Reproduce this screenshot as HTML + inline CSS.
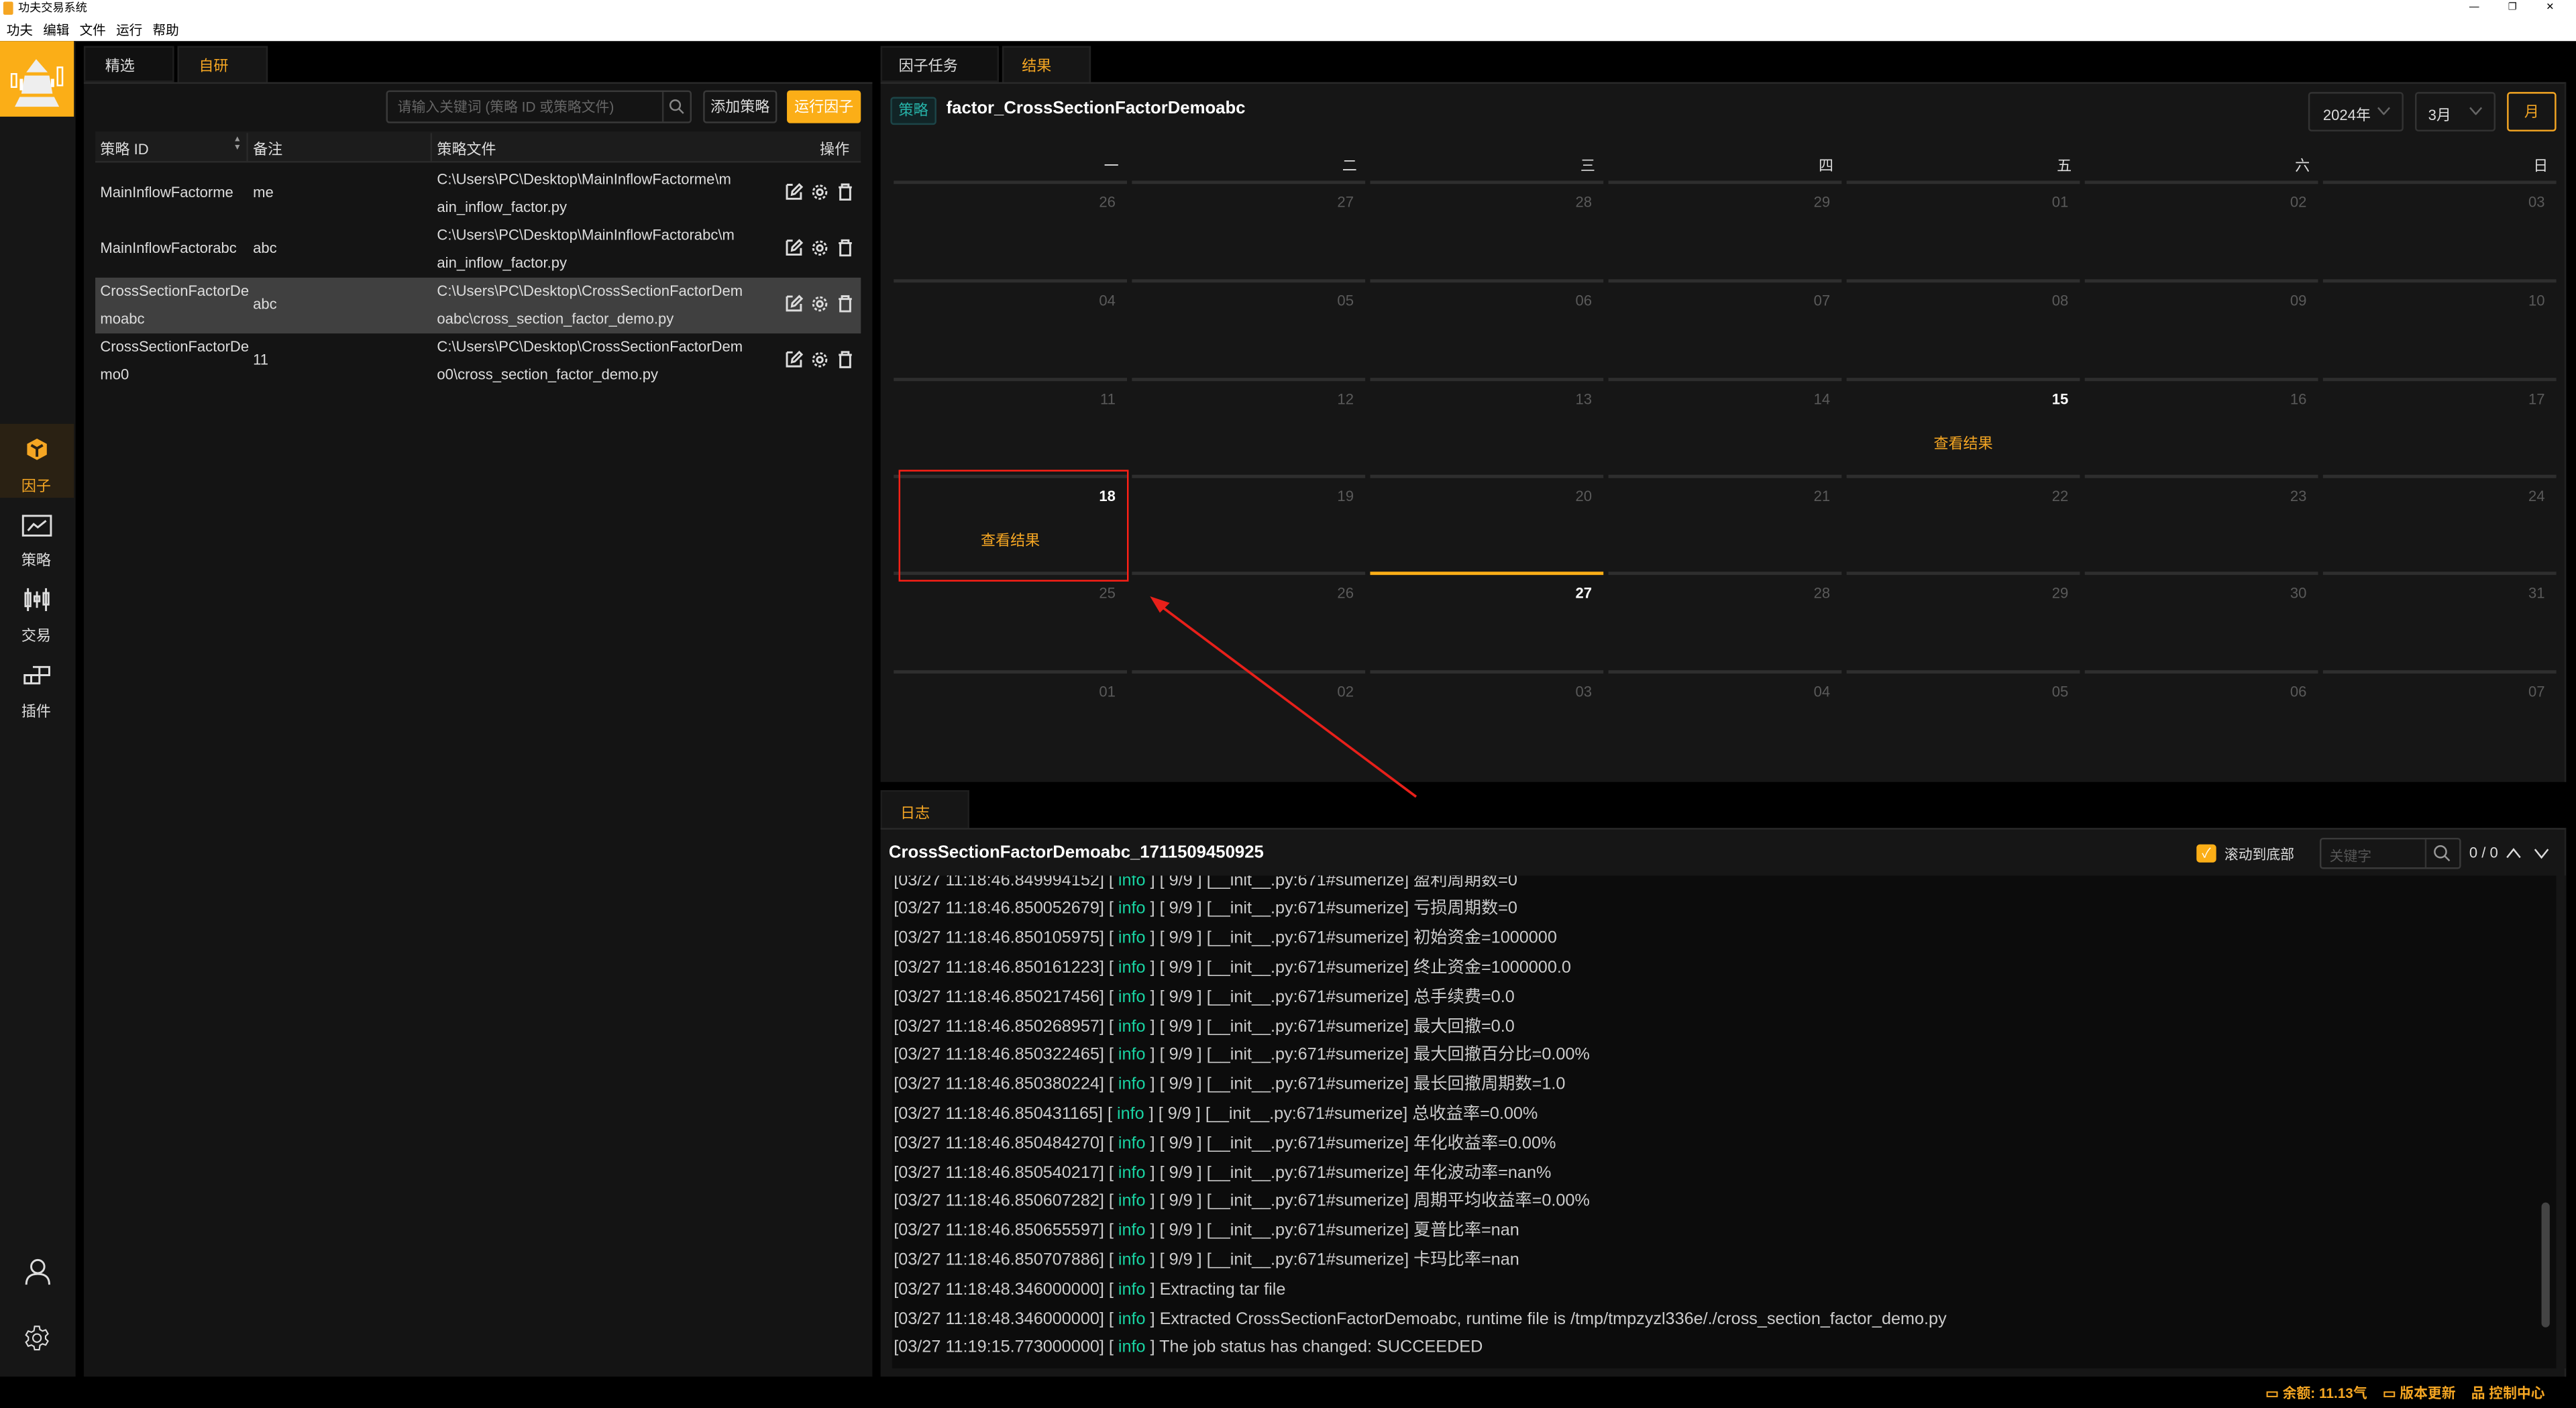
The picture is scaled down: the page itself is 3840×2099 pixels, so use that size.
<!DOCTYPE html>
<html><head><meta charset="utf-8"><style>
*{margin:0;padding:0;box-sizing:border-box}
html,body{width:3840px;height:2099px;overflow:hidden;background:#000}
#w{width:1568px;height:857px;transform:scale(2.44898);transform-origin:0 0;position:relative;background:#000;font-family:"Liberation Sans","Noto Sans CJK SC",sans-serif;color:#ddd;font-size:9px}
.a{position:absolute}
.or{color:#f5a623}
.ic{stroke:#ddd;fill:none;stroke-width:1.2}
.row{position:absolute;left:58px;width:466px;height:34px}
.row div{position:absolute;line-height:17px;font-size:9px;color:#ddd}
.ln{position:absolute;height:2px;background:#2e2e2e}
.dn{position:absolute;font-size:9px;color:#5a5a5a;text-align:right;width:30px}
.log{position:absolute;left:544px;font-size:10.3px;color:#ccc;white-space:nowrap;line-height:17.8px}
.log i{font-style:normal;color:#19d3a2}
</style></head><body><div id="w">
<div class="a" style="left:0;top:0;width:1568px;height:25px;background:#fff"></div>
<div class="a" style="left:2px;top:1px;width:6px;height:8px;background:#f5a623;border-radius:1px"></div>
<div class="a" style="left:11px;top:0;font-size:7px;color:#000;line-height:11px">功夫交易系统</div>
<div class="a" style="left:1503px;top:0;font-size:6px;color:#000;line-height:11px;word-spacing:16px">— ❐ ✕</div>
<div class="a" style="left:4px;top:12px;font-size:8px;color:#000;line-height:13px;word-spacing:4px">功夫 编辑 文件 运行 帮助</div>
<div class="a" style="left:0;top:25px;width:46px;height:813px;background:#161616"></div>
<div class="a" style="left:0;top:25px;width:45px;height:46px;background:#fbae17"></div>
<svg class="a" style="left:4px;top:29px" width="37" height="38" viewBox="0 0 37 38"><path d="M18 7 L12 15 L25 15Z" fill="#eee"/><path d="M11 17 L26 17 L28 28 L9 28Z" fill="#eee"/><path d="M8 30 L29 30 L32 36 L5 36Z" fill="#eee"/><rect x="3" y="16" width="3" height="8" fill="none" stroke="#fff"/><rect x="31" y="12" width="3" height="11" fill="none" stroke="#fff"/><rect x="27" y="19" width="2" height="5" fill="#fff"/><rect x="8" y="19" width="2" height="7" fill="#fff"/></svg>
<div class="a" style="left:0;top:258px;width:45px;height:45px;background:#2a2113"></div>
<svg class="a" style="left:15px;top:266px" width="15" height="15" viewBox="0 0 15 15"><path d="M7.5 1 L13.5 4.2 L13.5 10.8 L7.5 14 L1.5 10.8 L1.5 4.2Z" fill="#f5a623"/><path d="M4 5 L7.5 7 L11 5 M7.5 7 V12" stroke="#2a2113" stroke-width="1.6" fill="none"/></svg>
<div class="a or" style="left:13px;top:289px;font-size:9px">因子</div>
<svg class="a" style="left:13px;top:313px" width="19" height="14" viewBox="0 0 19 14"><rect x="1" y="1" width="17" height="12" class="ic"/><path d="M4 10 L7.5 6 L10 8 L15 4" class="ic"/></svg>
<div class="a" style="left:13px;top:334px">策略</div>
<svg class="a" style="left:14px;top:358px" width="17" height="14" viewBox="0 0 17 14"><path d="M3 0V14 M8.5 2V12 M14 0V14" class="ic"/><rect x="1.5" y="3" width="3" height="8" fill="#161616" class="ic"/><rect x="7" y="5" width="3" height="3" fill="#161616" class="ic"/><rect x="12.5" y="3" width="3" height="7" fill="#161616" class="ic"/></svg>
<div class="a" style="left:13px;top:380px">交易</div>
<svg class="a" style="left:14px;top:405px" width="17" height="12" viewBox="0 0 17 12"><path d="M1 6H10V11H1Z M5 6V11 M6 1H16V6H6 M10 1V6" class="ic"/></svg>
<div class="a" style="left:13px;top:426px">插件</div>
<svg class="a" style="left:15px;top:766px" width="16" height="17" viewBox="0 0 16 17"><circle cx="8" cy="5" r="4" class="ic" stroke-width="1.4"/><path d="M1 16 C1 11 4 9.5 8 9.5 C12 9.5 15 11 15 16" class="ic" stroke-width="1.4"/></svg>
<svg class="a" style="left:14px;top:806px" width="17" height="17" viewBox="0 0 24 24"><path d="M12 8.5a3.5 3.5 0 1 0 0 7a3.5 3.5 0 1 0 0-7z M10 2h4l.6 2.8 2.2 1.2 2.7-1 2 3.4-2.1 1.9v2.4l2.1 1.9-2 3.4-2.7-1-2.2 1.2L14 22h-4l-.6-2.8-2.2-1.2-2.7 1-2-3.4 2.1-1.9V11.3L2.5 9.4l2-3.4 2.7 1 2.2-1.2z" class="ic" stroke-width="1.8"/></svg>
<div class="a" style="left:51px;top:28px;width:55px;height:22px;background:#111;border:1px solid #1e1e1e"></div>
<div class="a" style="left:64px;top:33px">精选</div>
<div class="a" style="left:108px;top:28px;width:55px;height:23px;background:#161616;border:1px solid #222"></div>
<div class="a or" style="left:121px;top:33px">自研</div>
<div class="a" style="left:51px;top:50px;width:480px;height:788px;background:#141414;border-top:1px solid #2a2a2a"></div>
<div class="a" style="left:235px;top:55px;width:186px;height:20px;border:1px solid #3a3a3a;border-radius:2px;background:#141414"></div>
<div class="a" style="left:403px;top:56px;width:1px;height:18px;background:#333"></div>
<div class="a" style="left:242px;top:59px;color:#666;font-size:8.5px">请输入关键词 (策略 ID 或策略文件)</div>
<svg class="a" style="left:407px;top:60px" width="10" height="10" viewBox="0 0 10 10"><circle cx="4" cy="4" r="3" stroke="#888" fill="none"/><path d="M6.3 6.3 L9 9" stroke="#888"/></svg>
<div class="a" style="left:428px;top:55px;width:45px;height:20px;border:1px solid #3a3a3a;border-radius:2px;text-align:center;line-height:18px;font-size:9px">添加策略</div>
<div class="a" style="left:479px;top:55px;width:45px;height:20px;background:#fbae17;border-radius:2px;text-align:center;line-height:20px;font-size:9px;color:#fff">运行因子</div>
<div class="a" style="left:58px;top:80px;width:466px;height:19px;background:#1c1c1c;border-bottom:1px solid #2a2a2a"></div>
<div class="a" style="left:61px;top:84px">策略 ID</div>
<div class="a" style="left:142px;top:83px;font-size:5px;line-height:5px;color:#999">▲<br>▼</div>
<div class="a" style="left:150px;top:81px;width:1px;height:17px;background:#2a2a2a"></div>
<div class="a" style="left:154px;top:84px">备注</div>
<div class="a" style="left:262px;top:81px;width:1px;height:17px;background:#2a2a2a"></div>
<div class="a" style="left:266px;top:84px">策略文件</div>
<div class="a" style="left:499px;top:84px">操作</div>
<div class="row" style="top:101px"><div style="left:3px;top:8px">MainInflowFactorme</div><div style="left:96px;top:8px">me</div><div style="left:208px;top:0">C:\Users\PC\Desktop\MainInflowFactorme\m<br>ain_inflow_factor.py</div></div>
<div class="row" style="top:135px"><div style="left:3px;top:8px">MainInflowFactorabc</div><div style="left:96px;top:8px">abc</div><div style="left:208px;top:0">C:\Users\PC\Desktop\MainInflowFactorabc\m<br>ain_inflow_factor.py</div></div>
<div class="row" style="top:169px;background:#404040"><div style="left:3px;top:0">CrossSectionFactorDe<br>moabc</div><div style="left:96px;top:8px">abc</div><div style="left:208px;top:0">C:\Users\PC\Desktop\CrossSectionFactorDem<br>oabc\cross_section_factor_demo.py</div></div>
<div class="row" style="top:203px"><div style="left:3px;top:0">CrossSectionFactorDe<br>mo0</div><div style="left:96px;top:8px">11</div><div style="left:208px;top:0">C:\Users\PC\Desktop\CrossSectionFactorDem<br>o0\cross_section_factor_demo.py</div></div>
<svg class="a" style="left:478px;top:111px" width="42" height="125" viewBox="0 0 42 125">
<defs><g id="ops"><path d="M1 1.5H4.5 M1 1.5V10H9.5V6" class="ic" stroke-width="1"/><path d="M4 7.5 L4.3 5.5 L8.5 1.3 L10 2.8 L5.8 7Z" class="ic" stroke-width="1"/><circle cx="21" cy="6" r="1.7" class="ic" stroke-width="1"/><circle cx="21" cy="6" r="4" class="ic" stroke-width="1.6" stroke-dasharray="1.6 1.1"/><path d="M32.5 3H40.5 M34.5 3V1.3H38.5V3 M33.5 3.5V10.5H39.5V3.5" class="ic" stroke-width="1"/></g></defs>
<use href="#ops" y="0"/><use href="#ops" y="34"/><use href="#ops" y="68"/><use href="#ops" y="102"/></svg>
<div class="a" style="left:536px;top:28px;width:72px;height:22px;background:#111;border:1px solid #1e1e1e"></div>
<div class="a" style="left:547px;top:33px">因子任务</div>
<div class="a" style="left:610px;top:28px;width:54px;height:23px;background:#161616;border:1px solid #222"></div>
<div class="a or" style="left:622px;top:33px">结果</div>
<div class="a" style="left:536px;top:50px;width:1026px;height:426px;background:#161616;border-top:1px solid #2a2a2a;border-right:1px solid #222"></div>
<div class="a" style="left:542px;top:59px;width:28px;height:17px;background:#112426;border:1px solid #1c4548;border-radius:2px;color:#26b3a8;text-align:center;line-height:15px;font-size:9px">策略</div>
<div class="a" style="left:576px;top:60px;font-size:10.5px;font-weight:bold;color:#fff">factor_CrossSectionFactorDemoabc</div>
<div class="a" style="left:1405px;top:56px;width:58px;height:24px;border:1px solid #333;border-radius:2px"></div>
<div class="a" style="left:1414px;top:63px;font-size:9px">2024年</div>
<svg class="a" style="left:1447px;top:65px" width="8" height="5" viewBox="0 0 8 5"><path d="M0.5 0.5 L4 4.5 L7.5 0.5" stroke="#666" fill="none"/></svg>
<div class="a" style="left:1470px;top:56px;width:49px;height:24px;border:1px solid #333;border-radius:2px"></div>
<div class="a" style="left:1478px;top:63px;font-size:9px">3月</div>
<svg class="a" style="left:1503px;top:65px" width="8" height="5" viewBox="0 0 8 5"><path d="M0.5 0.5 L4 4.5 L7.5 0.5" stroke="#666" fill="none"/></svg>
<div class="a" style="left:1526px;top:56px;width:30px;height:24px;border:1px solid #f5a623;border-radius:2px;color:#f5a623;text-align:center;line-height:22px;font-size:9px">月</div>
<div class="a" style="left:536px;top:481px;width:54px;height:24px;background:#161616;border:1px solid #1e1e1e"></div>
<div class="a or" style="left:548px;top:488px">日志</div>
<div class="a" style="left:536px;top:504px;width:1026px;height:334px;background:#161616;border-top:1px solid #2a2a2a;border-right:1px solid #222"></div>
<div class="a" style="left:543px;top:533px;width:1013px;height:300px;background:#0c0c0c"></div>
<div class="a" style="left:1379px;top:842px;font-size:8.5px;font-weight:bold;color:#f5a623;white-space:nowrap">▭ 余额: 11.13气 &nbsp;&nbsp; ▭ 版本更新 &nbsp;&nbsp; 品 控制中心</div>
</div>
<script>
(function(){
var w=document.getElementById('w');
function add(h){w.insertAdjacentHTML('beforeend',h);}
var wd=['一','二','三','四','五','六','日'];
var x0=544,cw=145,cg=2;
for(var c=0;c<7;c++){var x=x0+c*cw;
 add('<div class="a" style="left:'+(x+cw-cg-20)+'px;top:94px;width:14px;text-align:right;font-size:9px;color:#ddd">'+wd[c]+'</div>');}
var lines=[110,170,230,289,348,408];
var d=[[26,27,28,29,1,2,3],[4,5,6,7,8,9,10],[11,12,13,14,15,16,17],[18,19,20,21,22,23,24],[25,26,27,28,29,30,31],[1,2,3,4,5,6,7]];
for(var r=0;r<6;r++){for(var c=0;c<7;c++){
 var x=x0+c*cw, y=lines[r];
 var col='#2e2e2e'; if(r==4&&c==2) col='#fbae17';
 add('<div class="ln" style="left:'+x+'px;top:'+y+'px;width:'+(cw-cg-1)+'px;background:'+col+'"></div>');
 var v=d[r][c], s=(v<10?'0':'')+v;
 var hl=(r==2&&c==4)||(r==3&&c==0)||(r==4&&c==2);
 add('<div class="dn" style="left:'+(x+cw-cg-38)+'px;top:'+(y+8)+'px;'+(hl?'color:#fff;font-weight:bold':'')+'">'+s+'</div>');
}}
add('<div class="a or" style="left:1177px;top:263px;font-size:9px">查看结果</div>');
add('<div class="a or" style="left:597px;top:322px;font-size:9px">查看结果</div>');
add('<div class="a" style="left:547px;top:286px;width:140px;height:68px;border:1.5px solid #ff2016"></div>');
add('<svg class="a" style="left:690px;top:355px" width="180" height="135" viewBox="0 0 180 135"><path d="M172 130 L14 12" stroke="#e8201a" stroke-width="1.5"/><path d="M10 8 L22 12 L16 18Z" fill="#e8201a"/></svg>');
var L=[['46.849994152','盈利周期数=0'],['46.850052679','亏损周期数=0'],['46.850105975','初始资金=1000000'],['46.850161223','终止资金=1000000.0'],['46.850217456','总手续费=0.0'],['46.850268957','最大回撤=0.0'],['46.850322465','最大回撤百分比=0.00%'],['46.850380224','最长回撤周期数=1.0'],['46.850431165','总收益率=0.00%'],['46.850484270','年化收益率=0.00%'],['46.850540217','年化波动率=nan%'],['46.850607282','周期平均收益率=0.00%'],['46.850655597','夏普比率=nan'],['46.850707886','卡玛比率=nan']];
var y=527.5;
for(var i=0;i<L.length;i++){add('<div class="log" style="top:'+(y+i*17.8)+'px">[03/27 11:18:'+L[i][0]+'] [ <i>info</i> ] [ 9/9 ] [__init__.py:671#sumerize] '+L[i][1]+'</div>');}
var E=['[03/27 11:18:48.346000000] [ <i>info</i> ] Extracting tar file','[03/27 11:18:48.346000000] [ <i>info</i> ] Extracted CrossSectionFactorDemoabc, runtime file is /tmp/tmpzyzl336e/./cross_section_factor_demo.py','[03/27 11:19:15.773000000] [ <i>info</i> ] The job status has changed: SUCCEEDED'];
for(var j=0;j<3;j++){add('<div class="log" style="top:'+(y+(14+j)*17.8)+'px">'+E[j]+'</div>');}
add('<div class="a" style="left:543px;top:505px;width:1013px;height:28px;background:#161616"></div>');
add('<div class="a" style="left:541px;top:513px;font-size:10.5px;font-weight:bold;color:#fff">CrossSectionFactorDemoabc_1711509450925</div>');
add('<div class="a" style="left:1337px;top:514px;width:12px;height:11px;background:#fbae17;border-radius:2px;color:#fff;font-size:8px;text-align:center;line-height:11px">✓</div>');
add('<div class="a" style="left:1354px;top:514px;font-size:8.5px">滚动到底部</div>');
add('<div class="a" style="left:1412px;top:510px;width:86px;height:19px;border:1px solid #3a3a3a;border-radius:2px"></div><div class="a" style="left:1476px;top:511px;width:1px;height:17px;background:#333"></div><div class="a" style="left:1418px;top:515px;font-size:8.5px;color:#555">关键字</div>');
add('<svg class="a" style="left:1481px;top:514px" width="11" height="11" viewBox="0 0 11 11"><circle cx="4.5" cy="4.5" r="3.5" stroke="#999" fill="none"/><path d="M7 7 L10 10" stroke="#999"/></svg><div class="a" style="left:1503px;top:514px;font-size:9px">0 / 0</div><svg class="a" style="left:1525px;top:515px" width="28" height="9" viewBox="0 0 28 9"><path d="M1 7 L5 2 L9 7 M18 2 L22 7 L26 2" stroke="#ddd" fill="none"/></svg>');
add('<div class="a" style="left:1547px;top:732px;width:5px;height:76px;background:#444;border-radius:3px"></div>');
add('<div class="a" style="left:1556px;top:533px;width:6px;height:300px;background:#161616"></div>');
})();
</script>
</body></html>
